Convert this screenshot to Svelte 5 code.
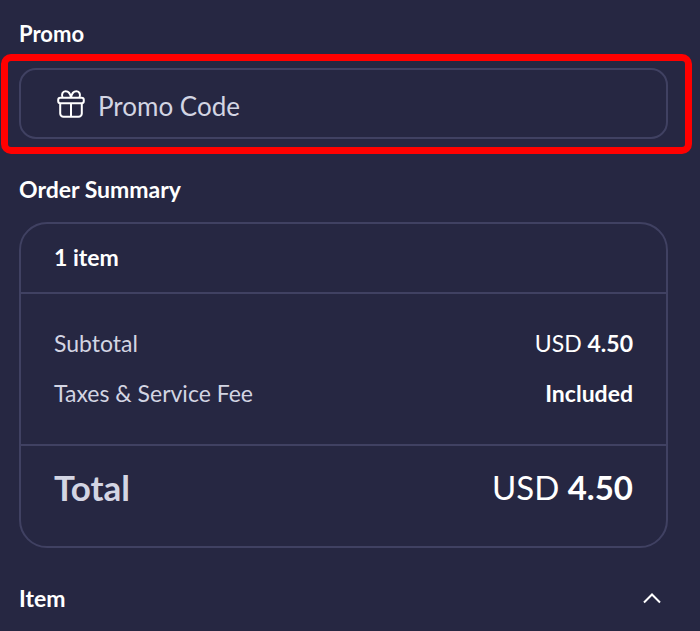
<script>
  let promoCode = $state("");
  let itemOpen = $state(true);

  const currency = "USD";
  const itemCount = 1;
  const subtotal = 4.5;
  const total = 4.5;
</script>

<main class="checkout">
  <label class="heading promo-heading" for="promo-code">Promo</label>

  <div class="highlight">
    <div class="promo-field">
      <svg class="gift-icon" viewBox="0 0 28 28" aria-hidden="true">
        <rect x="1.2" y="7.800" width="25.600" height="5.400" rx="2.200" />
        <path d="M3.200 13.400V23.500a3.300 3.300 0 0 0 3.300 3.300h15a3.300 3.300 0 0 0 3.300-3.300V13.400" />
        <path d="M14 13.400V27" />
        <path d="M5.600 7.800C4.100 4.500 5.600 1.200 8.500 1.200C11.700 1.200 13.500 4.200 14 7.800" />
        <path d="M22.400 7.800C23.900 4.500 22.400 1.200 19.500 1.200C16.300 1.200 14.500 4.200 14 7.800" />
      </svg>
      <input id="promo-code" type="text" placeholder="Promo Code" bind:value={promoCode} />
    </div>
  </div>

  <h2 class="heading">Order Summary</h2>

  <section class="summary">
    <div class="summary-header">{itemCount} item</div>

    <div class="summary-lines">
      <div class="row">
        <span class="label">Subtotal</span>
        <span>{currency} <strong>{subtotal.toFixed(2)}</strong></span>
      </div>
      <div class="row">
        <span class="label">Taxes &amp; Service Fee</span>
        <strong>Included</strong>
      </div>
    </div>

    <div class="row total">
      <strong class="label">Total</strong>
      <span class="amount">{currency} <strong>{total.toFixed(2)}</strong></span>
    </div>
  </section>

  <button
    class="item-toggle"
    type="button"
    aria-expanded={itemOpen}
    onclick={() => (itemOpen = !itemOpen)}
  >
    <span>Item</span>
    <svg class="chevron" class:closed={!itemOpen} viewBox="0 0 20 12" aria-hidden="true">
      <path d="M2 10.500l8-8 8 8" />
    </svg>
  </button>
</main>

<style>
  :global(body) {
    margin: 0;
    background: #262742;
  }

  .checkout {
    padding: 20px 32px 16px 19px;
    font-family: Lato, "Open Sans", sans-serif;
    font-size: 23px;
    line-height: 28px;
    color: #ffffff;
  }

  .heading {
    display: block;
    margin: 21px 0 19px;
    font-size: 23px;
    font-weight: 700;
  }

  .promo-heading {
    margin: 0 0 6px;
    font-size: 22px;
  }

  .highlight {
    margin: 0 -24px 0 -18px;
    padding: 7px 17px 8px 11px;
    border: 7px solid #ff0000;
    border-radius: 10px;
  }

  .promo-field {
    display: flex;
    align-items: center;
    gap: 13px;
    padding: 18px 36px;
    border: 2px solid #404162;
    border-radius: 17px;
  }

  .gift-icon {
    flex: none;
    width: 28px;
    height: 28px;
    fill: none;
    stroke: #ffffff;
    stroke-width: 2;
    stroke-linejoin: round;
  }

  .promo-field input {
    flex: 1;
    min-width: 0;
    height: 31px;
    padding: 4px 0 0;
    border: 0;
    outline: none;
    box-sizing: border-box;
    background: transparent;
    font-family: inherit;
    font-size: 26px;
    color: #ffffff;
  }

  .promo-field input::placeholder {
    color: #d3d5e3;
    opacity: 1;
  }

  .summary {
    border: 2px solid #404162;
    border-radius: 28px;
  }

  .summary-header {
    padding: 19px 33px 21px;
    border-bottom: 2px solid #404162;
    font-weight: 700;
  }

  .summary-lines {
    display: flex;
    flex-direction: column;
    gap: 22px;
    padding: 35px 33px 37px;
    border-bottom: 2px solid #404162;
  }

  .row {
    display: flex;
    justify-content: space-between;
    align-items: center;
  }

  .label {
    color: #d3d5e3;
  }

  .total {
    padding: 21px 33px 39px;
    font-size: 35px;
    line-height: 40px;
  }

  .amount {
    font-size: 33px;
  }

  .item-toggle {
    display: flex;
    justify-content: space-between;
    align-items: center;
    width: 100%;
    margin-top: 36px;
    padding: 0 6px 0 0;
    border: 0;
    background: transparent;
    font-family: inherit;
    font-size: 23px;
    font-weight: 700;
    line-height: 28px;
    color: inherit;
    cursor: pointer;
  }

  .chevron {
    width: 20px;
    height: 12px;
    fill: none;
    stroke: #ffffff;
    stroke-width: 2;
  }

  .closed {
    transform: rotate(180deg);
  }
</style>
